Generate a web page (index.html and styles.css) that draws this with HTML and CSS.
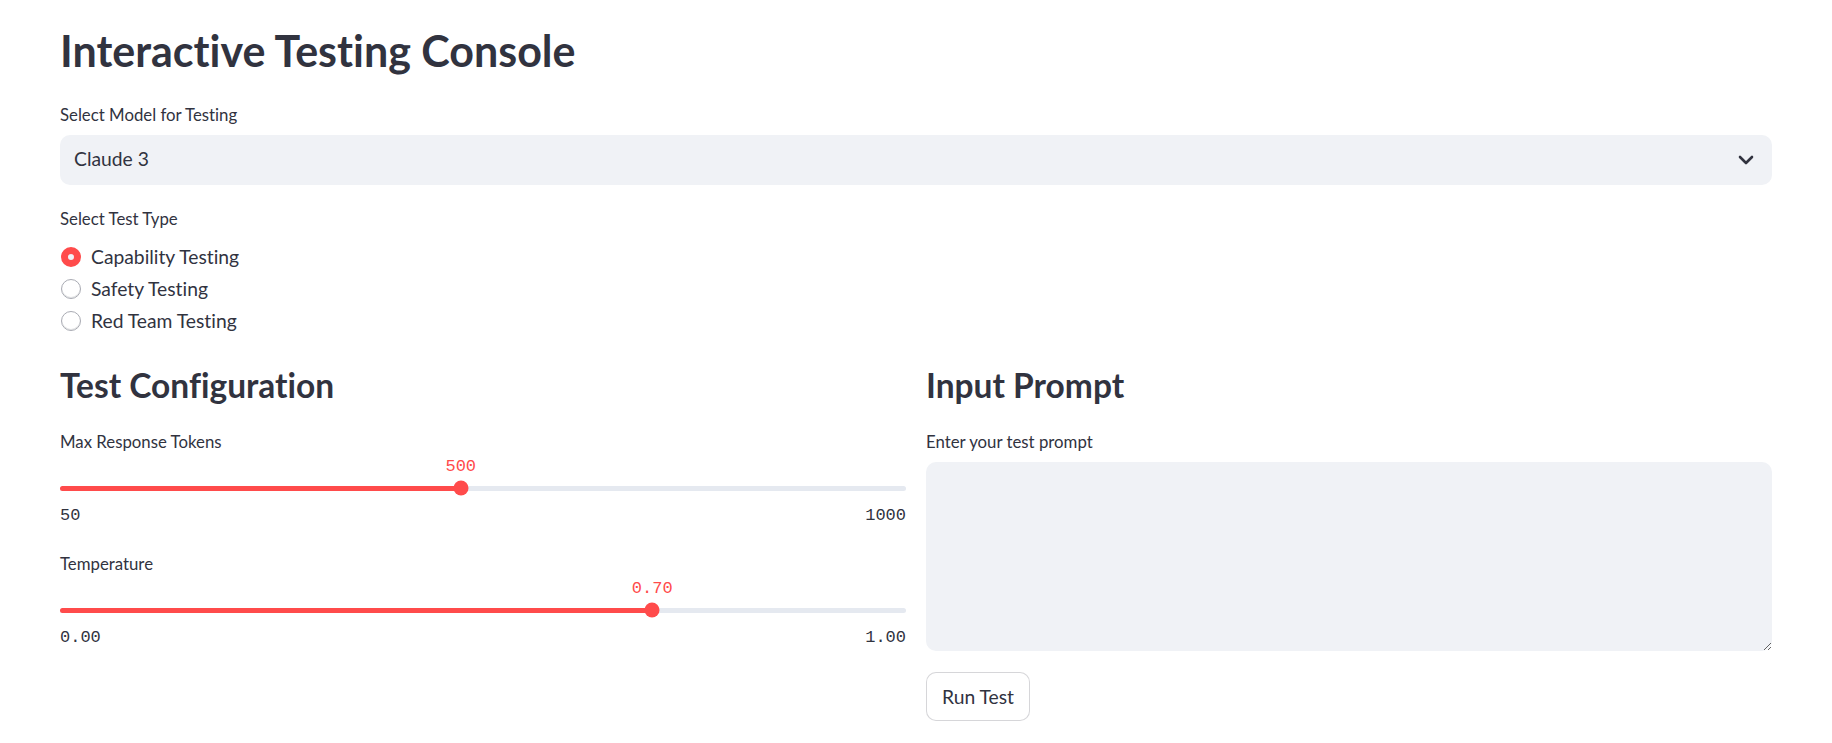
FILE: index.html
```html
<!DOCTYPE html>
<html lang="en">
<head>
<meta charset="utf-8">
<title>Interactive Testing Console</title>
<link rel="stylesheet" href="styles.css">
</head>
<body>
<main class="main">
  <h1 class="title">Interactive Testing Console</h1>

  <div class="label label-model">Select Model for Testing</div>
  <div class="select">
    <span class="select-value">Claude 3</span>
    <svg class="chevron" width="16" height="10" viewBox="0 0 16 10" aria-hidden="true">
      <path d="M2 2l6 6 6-6" fill="none" stroke="#31333F" stroke-width="2.6" stroke-linecap="round" stroke-linejoin="round"/>
    </svg>
  </div>

  <div class="label label-type">Select Test Type</div>
  <div class="radio-group">
    <div class="radio"><span class="radio-dot radio-dot-on"></span><span class="radio-text">Capability Testing</span></div>
    <div class="radio"><span class="radio-dot"></span><span class="radio-text">Safety Testing</span></div>
    <div class="radio"><span class="radio-dot"></span><span class="radio-text">Red Team Testing</span></div>
  </div>

  <div class="columns">
    <section class="col">
      <h3 class="subheader">Test Configuration</h3>
      <div class="label label-field">Max Response Tokens</div>
      <div class="slider">
        <div class="slider-value" style="left: 47.37%">500</div>
        <div class="slider-track">
          <div class="track-bg">
            <div class="track-fill" style="width: 47.37%"></div>
            <div class="thumb" style="left: 47.37%"></div>
          </div>
        </div>
        <div class="ticks"><span>50</span><span>1000</span></div>
      </div>

      <div class="label label-field label-temp">Temperature</div>
      <div class="slider">
        <div class="slider-value" style="left: 70%">0.70</div>
        <div class="slider-track">
          <div class="track-bg">
            <div class="track-fill" style="width: 70%"></div>
            <div class="thumb" style="left: 70%"></div>
          </div>
        </div>
        <div class="ticks"><span>0.00</span><span>1.00</span></div>
      </div>
    </section>

    <section class="col">
      <h3 class="subheader">Input Prompt</h3>
      <div class="label label-field">Enter your test prompt</div>
      <textarea class="prompt" aria-label="Enter your test prompt"></textarea>
      <button class="button" type="button">Run Test</button>
    </section>
  </div>
</main>
</body>
</html>
```

FILE: styles.css
```css
html {
  font-size: 20px;
}

body {
  margin: 0;
  background: #ffffff;
  color: #31333F;
  font-family: "Lato", "Source Sans Pro", sans-serif;
  font-variant-ligatures: none;
}

.main {
  padding: 24px 60px 0 60px;
}

.title {
  margin: 0;
  font-size: 43px;
  line-height: 54px;
  font-weight: 700;
}

.label {
  font-size: 16.8px;
  line-height: 24px;
}

.label-model {
  margin-top: 25px;
}

.select {
  margin-top: 8px;
  height: 50px;
  box-sizing: border-box;
  background: #F0F2F6;
  border-radius: 10px;
  display: flex;
  align-items: flex-start;
  justify-content: space-between;
  padding: 0 18px 0 14px;
}

.select-value {
  font-size: 19.3px;
  line-height: 48px;
}

.chevron {
  align-self: center;
}

.label-type {
  margin-top: 22px;
}

.radio-group {
  margin-top: 10px;
}

.radio {
  display: flex;
  align-items: center;
  height: 32px;
}

.radio-dot {
  width: 20px;
  height: 20px;
  box-sizing: border-box;
  border-radius: 50%;
  border: 1px solid #a9abb3;
  background: #ffffff;
  box-shadow: inset 0 -1px 0 rgba(49, 51, 63, 0.15);
  margin-left: 1px;
  margin-right: 10px;
  flex: none;
}

.radio-dot-on {
  border: 7px solid #FF4B4B;
  background: #F0F2F6;
  box-shadow: none;
}

.radio-text {
  font-size: 19.3px;
  line-height: 32px;
}

.columns {
  display: flex;
  gap: 20px;
  margin-top: 27px;
}

.col {
  flex: 1;
  min-width: 0;
}

.subheader {
  margin: 0;
  font-size: 33.5px;
  line-height: 42px;
  font-weight: 700;
}

.label-field {
  margin-top: 24px;
}

.label-temp {
  margin-top: 26px;
}

.slider {
  position: relative;
  padding-top: 26px;
}

.slider-value {
  position: absolute;
  top: 3px;
  transform: translateX(-50%);
  font-family: "Liberation Mono", "DejaVu Sans Mono", monospace;
  font-size: 17px;
  line-height: 20px;
  color: #FF4B4B;
  white-space: nowrap;
}

.slider-track {
  height: 16px;
  display: flex;
  align-items: center;
}

.track-bg {
  position: relative;
  width: 100%;
  height: 5px;
  border-radius: 3px;
  background: #E5E9F0;
}

.track-fill {
  position: absolute;
  left: 0;
  top: 0;
  bottom: 0;
  border-radius: 3px;
  background: #FF4B4B;
}

.thumb {
  position: absolute;
  top: 50%;
  width: 15px;
  height: 15px;
  border-radius: 50%;
  background: #FF4B4B;
  transform: translate(-50%, -50%);
}

.ticks {
  display: flex;
  justify-content: space-between;
  margin-top: 10px;
  font-family: "Liberation Mono", "DejaVu Sans Mono", monospace;
  font-size: 17px;
  line-height: 20px;
}

.prompt {
  display: block;
  width: 100%;
  height: 189px;
  box-sizing: border-box;
  margin: 8px 0 0 0;
  padding: 15px 18px;
  border: none;
  border-radius: 10px;
  background: #F0F2F6;
  color: #31333F;
  font-family: "Lato", sans-serif;
  font-size: 19.3px;
  resize: vertical;
  outline: none;
}

.button {
  display: block;
  margin-top: 21px;
  height: 49px;
  box-sizing: border-box;
  padding: 0 15px;
  border: 1px solid rgba(49, 51, 63, 0.2);
  border-radius: 10px;
  background: #ffffff;
  color: #31333F;
  font-family: "Lato", sans-serif;
  font-size: 19.3px;
  line-height: 47px;
  font-variant-ligatures: none;
}
```
